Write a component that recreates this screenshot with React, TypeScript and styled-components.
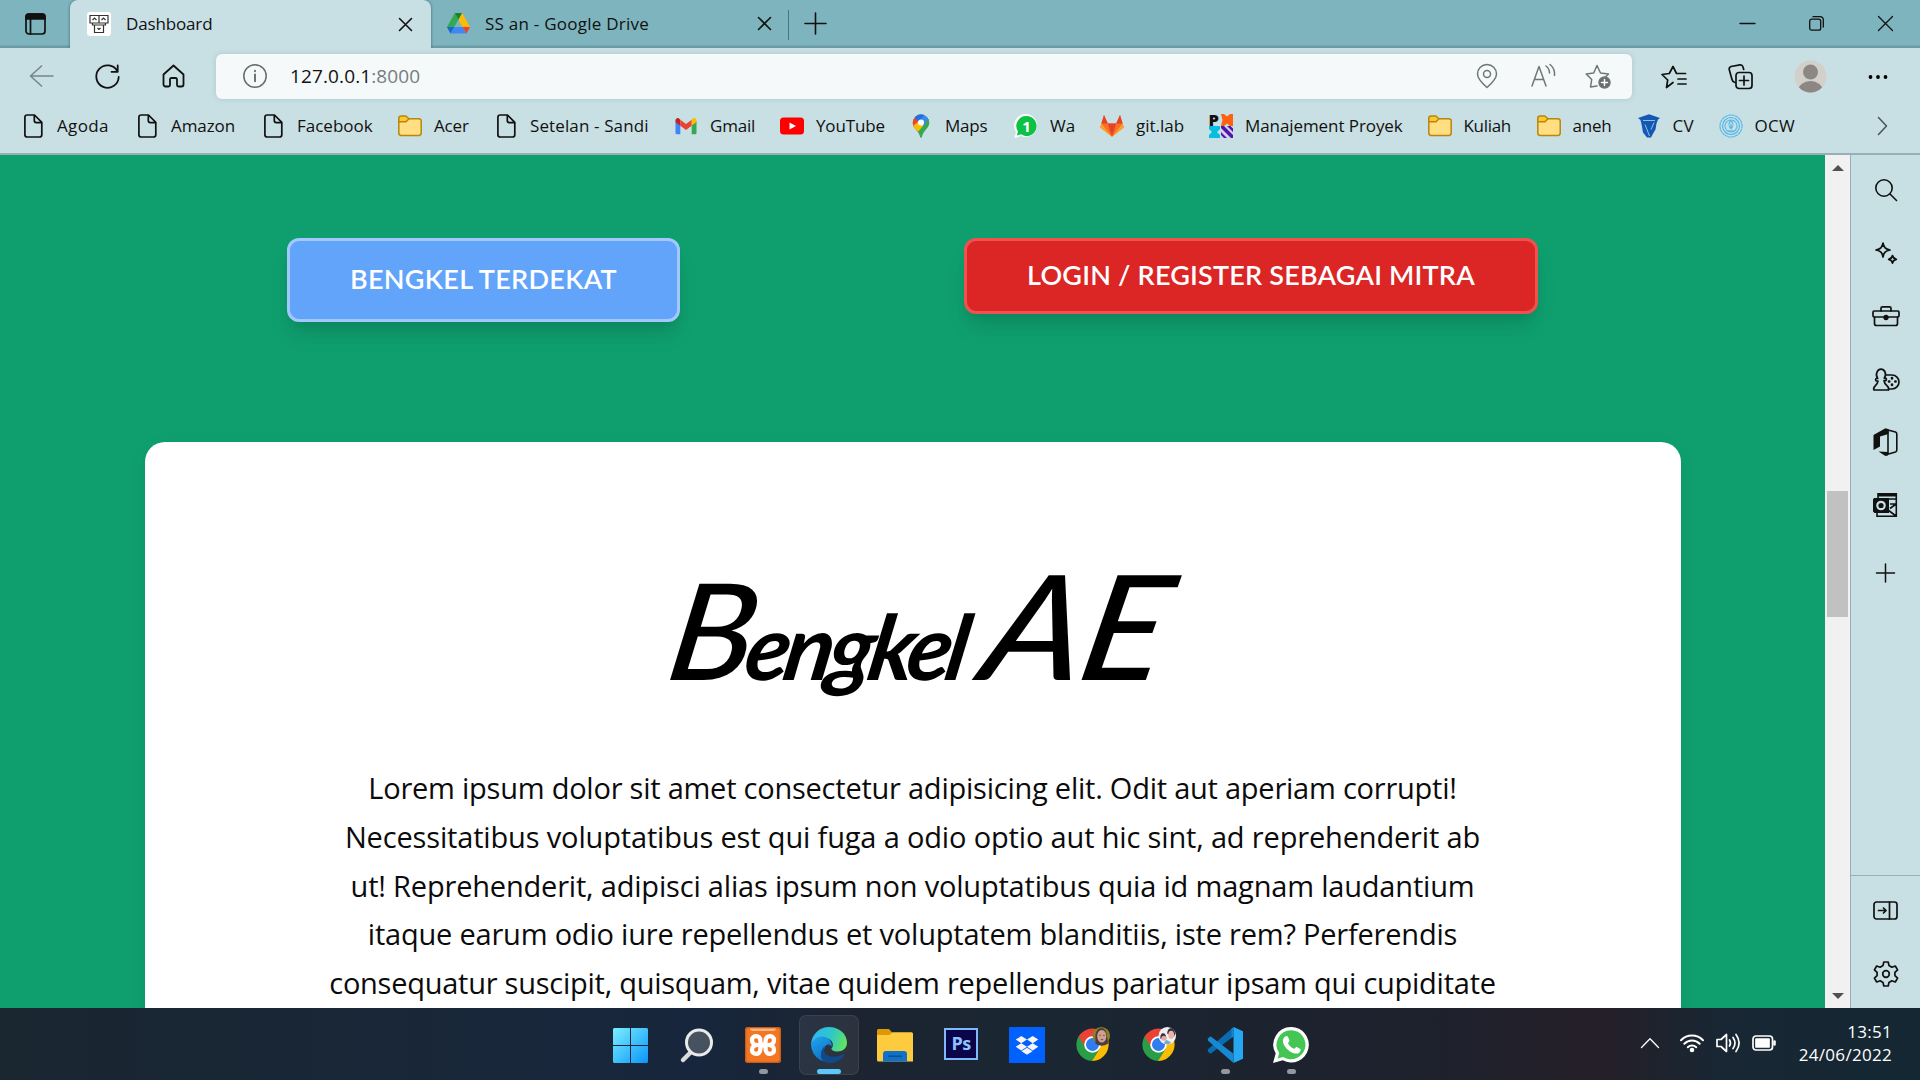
import React from 'react';
import styled, { createGlobalStyle } from 'styled-components';

const Global = createGlobalStyle`
  * { box-sizing: border-box; }
  html, body { margin: 0; padding: 0; overflow: hidden; }
  body { font-family: 'Open Sans', 'Noto Sans', sans-serif; color: #111; }
  svg { display: block; overflow: visible; flex: none; }
`;

const Screen = styled.div`
  width: 1920px; height: 1080px; overflow: hidden;
  display: flex; flex-direction: column;
`;

/* ---------- browser chrome ---------- */
const TabStrip = styled.div`
  height: 48px; display: flex; align-items: stretch;
  background: linear-gradient(#7eb4be 0 44px, #73a8b2 46px, #5b8c96 47px, #7fa9b1 48px);
`;
const TabActions = styled.div`
  width: 70px; display: flex; align-items: center; padding-left: 25px;
`;
const ActiveTab = styled.div`
  position: relative; width: 361px; display: flex; align-items: center; padding-left: 17px;
  background: #c8dfe3; border-radius: 8px 8px 0 0; box-shadow: 0 0 3px rgba(30, 70, 80, 0.7);
  clip-path: inset(0 -5px 0 -5px);
`;
const Tab = styled.div`
  width: 357px; height: 47px; display: flex; align-items: center; padding-left: 16px;
`;
const TabTitle = styled.span<{ $w: number; $ls?: number }>`
  width: ${(p) => p.$w}px; margin-left: 15px; font-size: 17px; line-height: 24px;
  letter-spacing: ${(p) => p.$ls ?? 0}px; white-space: nowrap;
`;
const TabDivider = styled.div`
  width: 1px; height: 30px; margin: 10px 16px 0 0; background: #47757e;
`;
const WindowButtons = styled.div`
  margin-left: auto; height: 47px; display: flex; align-items: center; gap: 54px; padding-right: 27px;
`;
const NewTab = styled.div`
  height: 46px; display: flex; align-items: center;
`;

const Toolbar = styled.div`
  height: 57px; display: flex; align-items: center; background: #c8dfe3; padding: 0 32px 0 29px;
`;
const NavButtons = styled.div`
  width: 187px; display: flex; align-items: center; gap: 42px; padding-bottom: 1px;
`;
const AddressBar = styled.div`
  width: 1416px; height: 45px; display: flex; align-items: center; padding: 0 21px 1px 27px;
  background: #f5f9fa; border-radius: 6px; box-shadow: 0 0 5px rgba(100, 150, 160, 0.3);
`;
const Url = styled.span`
  margin-left: 23px; font-size: 19px; letter-spacing: 0.12px; line-height: 26px;
`;
const Port = styled.span` color: #777d7f; `;
const AddressActions = styled.div`
  margin-left: auto; display: flex; align-items: center; gap: 29px;
`;
const ToolActions = styled.div`
  flex: 1; display: flex; align-items: center; justify-content: space-between; padding-left: 29px;
`;

const Bookmarks = styled.div`
  height: 50px; display: flex; align-items: center; padding: 0 32px 7px 21px;
  background: #c8dfe3; border-bottom: 2px solid #9aafb4;
`;
const Bookmark = styled.div`
  display: flex; align-items: center; gap: 12px; margin-right: 26px;
`;
const BookmarkLabel = styled.span<{ $w: number; $ls: number }>`
  width: ${(p) => p.$w}px; font-size: 17px; line-height: 24px; white-space: nowrap;
  letter-spacing: ${(p) => p.$ls}px;
`;
const More = styled.div` margin-left: auto; `;

/* ---------- page ---------- */
const Body = styled.div` height: 853px; display: flex; `;
const Page = styled.main`
  width: 1825px; overflow: hidden; background: #0f9f6e; display: flex; flex-direction: column; align-items: center;
`;
const ButtonRow = styled.div`
  flex: none; align-self: stretch; height: 287px; padding: 83px 0 0 287px; display: flex; align-items: flex-start; gap: 284px;
`;
const ActionButton = styled.button<{ $bg: string; $bd: string; $w: number; $h: number; $ls: number }>`
  width: ${(p) => p.$w}px; height: ${(p) => p.$h}px; padding: 0 0 3px;
  background: ${(p) => p.$bg}; border: 3px solid ${(p) => p.$bd}; border-radius: 12px;
  color: #fff; font: 600 27px/38px Lato, 'Open Sans', sans-serif; letter-spacing: ${(p) => p.$ls}px; white-space: nowrap;
  box-shadow: 0 15px 22px -4px rgba(0, 0, 0, 0.12), 0 6px 9px -3px rgba(0, 0, 0, 0.07);
`;
const Card = styled.section`
  width: 1536px; height: 640px; flex: none; background: #fff; border-radius: 20px;
  box-shadow: 0 4px 18px rgba(0, 0, 0, 0.06);
  display: flex; flex-direction: column; align-items: center;
`;
const Signature = styled.h1`
  margin: 107px 0 0; width: 522px; height: 215px; padding-left: 14px;
  display: flex; align-items: baseline; white-space: nowrap;
  font-family: Lato, 'Open Sans', sans-serif; font-style: italic; line-height: 150px; color: #000;
`;
const Stroke = styled.span<{ $size: number; $weight: number; $ls: number; $ml?: number; $skew: number; $sx: number }>`
  font-size: ${(p) => p.$size}px; font-weight: ${(p) => p.$weight}; letter-spacing: ${(p) => p.$ls}px;
  margin-left: ${(p) => p.$ml ?? 0}px; transform-origin: 0 75%;
  transform: skewX(${(p) => p.$skew}deg) scaleX(${(p) => p.$sx});
`;
const Paragraph = styled.p`
  margin: 0; display: flex; flex-direction: column; align-items: center; color: #0b0b0b;
  font-size: 29px; line-height: 48.75px;
`;
const Line = styled.span<{ $ls: number }>`
  white-space: nowrap; letter-spacing: ${(p) => p.$ls}px;
`;

const ScrollTrack = styled.div`
  width: 25px; background: #f1f1f1; display: flex; flex-direction: column; align-items: center;
  padding: 9px 0 8px; justify-content: space-between;
`;
const ScrollThumb = styled.div` width: 21px; height: 126px; margin-top: -57px; background: #c1c1c1; `;

const SideBar = styled.aside`
  width: 70px; background: #c8dfe3; border-left: 1px solid #9aafb4;
  display: flex; flex-direction: column; padding-top: 3px;
`;
const SideItem = styled.div<{ $h?: number }>`
  height: ${(p) => p.$h ?? 63.2}px; display: flex; align-items: center; justify-content: center;
`;
const SideFooter = styled.div`
  margin-top: auto; height: 133px; padding-top: 3px; border-top: 1px solid #9aafb4;
`;

/* ---------- taskbar ---------- */
const Taskbar = styled.footer`
  height: 72px; display: flex; padding-left: 598px;
  background: linear-gradient(90deg, #1a2630 0, #18273b 560px, #17263c 700px, #1c2431 850px, #1a2733 1050px, #1c222e 1300px, #1e212c 1450px, #251f29 1600px, #182733 1720px, #142733 1920px);
`;
const TaskItem = styled.div<{ $active?: boolean }>`
  width: 60px; height: 60px; margin: 7px 3px 0; padding-top: 12px; border-radius: 7px;
  display: flex; flex-direction: column; align-items: center;
  background: ${(p) => (p.$active ? 'rgba(255,255,255,0.07)' : 'none')};
  box-shadow: ${(p) => (p.$active ? 'inset 0 0 0 1px rgba(255,255,255,0.07)' : 'none')};
`;
const Indicator = styled.i<{ $active?: boolean }>`
  width: ${(p) => (p.$active ? 24 : 9)}px; height: 5px; margin-top: 6px; border-radius: 3px;
  background: ${(p) => (p.$active ? '#5cc7fb' : '#9297a0')};
`;
const PsTile = styled.div`
  width: 34px; height: 32px; margin: 1px 0 0; border: 2px solid #7fb8fb; background: #0b0549; color: #8ec3ff;
  font: 700 18px/27px 'Open Sans', sans-serif; text-align: center; letter-spacing: -0.5px;
`;
const Tray = styled.div`
  margin-left: auto; display: flex; align-items: center; padding: 0 28px 2px 0; color: #fff;
`;
const TrayIcon = styled.div<{ $mr: number }>` margin-right: ${(p) => p.$mr}px; `;
const Clock = styled.div`
  display: flex; flex-direction: column; align-items: flex-end; font-size: 17px; line-height: 23px; letter-spacing: 0.3px;
`;

type IconProps = { w: number; h: number; vb?: string; color?: string; sw?: number; children: React.ReactNode };
const Outline = ({ w, h, vb, color = '#111', sw = 1.6, children }: IconProps) => (
  <svg width={w} height={h} viewBox={vb ?? `0 0 ${w} ${h}`} fill="none" stroke={color} strokeWidth={sw} strokeLinecap="round" strokeLinejoin="round">
    {children}
  </svg>
);

const Cross = ({ s, sw = 1.6 }: { s: number; sw?: number }) => (
  <Outline w={s} h={s} sw={sw}><path d={`M.5 .5 ${s - 0.5} ${s - 0.5}M${s - 0.5} .5 .5 ${s - 0.5}`} /></Outline>
);
const DocIcon = () => (
  <Outline w={24} h={24} sw={1.7}><path d="M6.2 1h7.3l7.3 7.3v12.4a2.3 2.3 0 0 1-2.3 2.3H6.2a2.3 2.3 0 0 1-2.3-2.3V3.3A2.3 2.3 0 0 1 6.2 1zM13.3 1.4v5.2a2 2 0 0 0 2 2h5.2" /></Outline>
);
const FolderIcon = () => (
  <svg width="24" height="24" viewBox="0 0 24 24" stroke="#b8860b" strokeWidth="1.5" strokeLinejoin="round">
    <path d="M.8 5.5h20a2.4 2.4 0 0 1 2.4 2.4v12a2.4 2.4 0 0 1-2.4 2.4H3.2A2.4 2.4 0 0 1 .8 19.9z" fill="#ffdf82" transform="translate(0 -.8)" />
    <path d="M.8 4.4A2.4 2.4 0 0 1 3.2 2h4.6l3.2 2.7-3 3H.8z" fill="#fdc731" />
  </svg>
);
const GmailIcon = () => (
  <svg width="24" height="24" viewBox="0 0 24 24">
    <path d="M1.5 7v12a1.3 1.3 0 0 0 1.3 1.3h3.5V10z" fill="#4285f4" />
    <path d="M22.5 7v12a1.3 1.3 0 0 1-1.3 1.3h-3.5V10z" fill="#34a853" />
    <path d="M1.5 6.5v1.5l4.8 3.7V5.7L5 4.5C3.5 3.500 1.500 4.600 1.500 6.500z" fill="#c5221f" />
    <path d="M6.300 5.700v6L12 16l5.700-4.300v-6L12 10z" fill="#ea4335" />
    <path d="M22.500 6.500v1.500l-4.800 3.700V5.700L19 4.500c1.500-1 3.500.1 3.500 2z" fill="#fbbc04" />
  </svg>
);
const YouTubeIcon = () => (
  <svg width="24" height="24"><rect y="3.500" width="24" height="17" rx="3.500" fill="#f00" /><path d="M9.500 8.500v7l6.500-3.500z" fill="#fff" /></svg>
);
const MapsIcon = () => (
  <svg width="24" height="24" viewBox="0 0 24 24">
    <clipPath id="pin"><path d="M12 .5a8.200 8.200 0 0 1 8.200 8.200c0 5-4.200 6.800-6.300 11.300-.8 1.700-.8 3.800-1.900 3.800s-1.100-2.100-1.900-3.800C8 15.500 3.800 13.700 3.800 8.700A8.200 8.200 0 0 1 12 .5z" /></clipPath>
    <g clipPath="url(#pin)">
      <path d="M0 0h24v24H0z" fill="#34a853" /><path d="M0 0h24L4 20H0z" fill="#fbbc04" />
      <path d="M0 0h12L12 8 5 14H0z" fill="#ea4335" /><path d="M6 3 12 8 20 6 22 0H6z" fill="#4285f4" /><path d="M5 3 9 0h7l-6 8z" fill="#1a73e8" />
      <path d="M12 8.500 22 2v6L7 20 5 16z" fill="#34a853" /><path d="M4 12 11 6l4 5-8 9z" fill="#fbbc04" /><path d="M12 9 17 3l3 0-5 9z" fill="#4285f4" />
    </g>
    <circle cx="12" cy="8.500" r="3" fill="#fff" />
  </svg>
);
const WaIcon = () => (
  <svg width="24" height="24" viewBox="0 0 24 24">
    <path d="M12.500 0A11.500 11.500 0 1 1 7 22L.5 24l1.500-6A11.700 11.700 0 0 1 12.500 0z" fill="#fff" />
    <path d="M12.500 2A10 10 0 1 1 7 20.300L2.800 21.500l1.200-4A10 10 0 0 1 12.500 2z" fill="#0cc143" />
    <text x="12.500" y="17.500" textAnchor="middle" fontFamily="Open Sans" fontWeight="700" fontSize="15" fill="#fff">1</text>
  </svg>
);
const GitLabIcon = () => (
  <svg width="24" height="24" viewBox="0 0 24 24">
    <path d="M4 1 7.800 9.500h8.400L20 1l3.800 12.500L12 22.800.2 13.500z" fill="#fc6d26" />
    <path d="M4 1 7.800 9.500H1.400zM20 1l-3.800 8.500h6.400zM7.800 9.500h8.400L12 22.800z" fill="#e24329" />
    <path d="M1.400 9.500.2 13.500 12 22.800zM22.600 9.500l1.200 4L12 22.800z" fill="#fca326" />
  </svg>
);
const PmIcon = () => (
  <svg width="24" height="24" viewBox="0 0 24 24">
    <text x="-.5" y="12" fontFamily="Open Sans" fontWeight="800" fontSize="16.500" fill="#111">P</text>
    <path d="M12 0h3l3 2.500L21 0h3v12h-3l-3-2.500-3 2.500h-3l1.500-6z" fill="#ff610f" />
    <path d="M0 12h11v3l-3 3 3 3v3H0v-3l3-3-3-3z" fill="#05bfe0" />
    <path d="M12 12h12v12H12z" fill="#d7cfee" />
    <path d="M12 14v-2h3L24 21v3h-2zM12 21v-3l6 6h-3zM18 12h3.500l2.500 2.500V18z" fill="#4f17a8" />
  </svg>
);
const CvIcon = () => (
  <svg width="24" height="24" viewBox="0 0 24 24">
    <path d="M1 4 12 .3 23 4l-2 1.500-1.500 4-1 6-1.500 2.500-3 5.500h-4L6 18.500 4.500 10 3.500 6z" fill="#1259b5" />
    <path d="M8 10.500 12.500 22M17 8.500l-3 7M6 6.500l12 0" stroke="#c8dfe3" strokeWidth="1" fill="none" opacity=".75" />
  </svg>
);
const OcwIcon = () => (
  <Outline w={24} h={24} color="#4db5ea" sw={1.1}>
    <circle cx="12" cy="12" r="11" strokeDasharray="2.200 1.300" /><circle cx="12" cy="12" r="8.500" /><circle cx="12" cy="12" r="6" strokeDasharray="2 1" />
    <path d="M12 6.500c3 3 3 5 0 8-3-3-3-5 0-8zM9 17h6M12 10v5" />
  </Outline>
);
const DriveIcon = () => (
  <svg width="23" height="21" viewBox="0 0 23 21">
    <path d="M7.800 0 0 14l3.500 6.500L11.500 6.500z" fill="#34a853" /><path d="M7.800 0h7.400L11.500 6.800z" fill="#188038" />
    <path d="M15.200 0 23 14h-7.500L11.500 6.800z" fill="#fbbc04" /><path d="M0 14h7.500L3.500 20.500z" fill="#1967d2" />
    <path d="M7.500 14h8L19.500 20.500h-16z" fill="#4285f4" /><path d="M15.500 14H23l-3.500 6.500z" fill="#ea4335" />
  </svg>
);
const Favicon = () => (
  <svg width="24" height="24" viewBox="0 0 24 24">
    <rect width="24" height="24" rx="3" fill="#fff" />
    <path d="M3 3.500h9v7.500H3zM12 3.500h9v7.500h-9zM7.500 13h9v7.500h-9zM5.500 11v2h2M18.500 11v2h-2M5.500 8l2-2 2 2M14.500 8l2-2 2 2M10.500 16l1.500 1.500 1.500-1.500" fill="none" stroke="#333" strokeWidth="1.200" />
  </svg>
);

const bookmarks: [React.ReactNode, string, number, number][] = [
  [<DocIcon />, 'Agoda', 52, 0.35], [<DocIcon />, 'Amazon', 64, -0.1], [<DocIcon />, 'Facebook', 75, 0],
  [<FolderIcon />, 'Acer', 34, -0.15], [<DocIcon />, 'Setelan - Sandi', 118, 0.12], [<GmailIcon />, 'Gmail', 44, -0.2],
  [<YouTubeIcon />, 'YouTube', 67, -0.15], [<MapsIcon />, 'Maps', 43, -0.2], [<WaIcon />, 'Wa', 24, 0],
  [<GitLabIcon />, 'git.lab', 47, 0], [<PmIcon />, 'Manajement Proyek', 156.5, -0.08], [<FolderIcon />, 'Kuliah', 47, -0.3],
  [<FolderIcon />, 'aneh', 38, -0.2], [<CvIcon />, 'CV', 20, 0.3], [<OcwIcon />, 'OCW', 41, 0.3],
];

const paragraph: [string, number][] = [
  ['Lorem ipsum dolor sit amet consectetur adipisicing elit. Odit aut aperiam corrupti!', -0.235],
  ['Necessitatibus voluptatibus est qui fuga a odio optio aut hic sint, ad reprehenderit ab', -0.16],
  ['ut! Reprehenderit, adipisci alias ipsum non voluptatibus quia id magnam laudantium', -0.19],
  ['itaque earum odio iure repellendus et voluptatem blanditiis, iste rem? Perferendis', -0.21],
  ['consequatur suscipit, quisquam, vitae quidem repellendus pariatur ipsam qui cupiditate', -0.25],
];

const ChromeIcon = ({ girl }: { girl?: boolean }) => (
  <svg width="36" height="36" viewBox="0 0 37 37">
    <path d="M18 18 3.600 9.600A17 17 0 0 1 32.400 9.600z" fill="#ea4335" /><path d="M3.500 9.700A17 17 0 0 0 18 35l7.500-12.800L18 18z" fill="#2a9d48" />
    <path d="M18 10h14.600A17 17 0 0 1 17.500 35l8-13z" fill="#fbbc04" /><path d="M3.600 9.600 11 21.500 18 10h14.500z" fill="#ea4335" />
    <circle cx="18" cy="18" r="8.500" fill="#fff" /><circle cx="18" cy="18" r="6.700" fill="#2f7df1" />
    {girl ? (
      <g><circle cx="27" cy="9" r="9" fill="#8a8420" /><path d="M21 10c0-12 12-12 12 0l1 7c-5 3-8 3-13 0z" fill="#4d3b3d" /><ellipse cx="27.500" cy="9.500" rx="4.700" ry="6.500" fill="#d0a193" /><path d="M25 8.500h1.500M29 8.500h1.500M26.500 13h2.500" stroke="#65433f" /></g>
    ) : (
      <g><circle cx="27" cy="9" r="9" fill="#f2eef1" /><path d="M20 12c-1-7 6-8 6 0M27 7c0-8 8-7 8 0l-1 3z" fill="#332c38" /><circle cx="23.500" cy="11.500" r="2.600" fill="#e2aaa0" /><ellipse cx="31" cy="8" rx="3" ry="4.200" fill="#e8b5a8" /><path d="M23 17l3-4 5 3-3 2z" fill="#7aa8cd" /></g>
    )}
  </svg>
);

const StartIcon = () => (
  <svg width="36" height="36" viewBox="0 0 36 36">
    <defs><linearGradient id="win" x1="0" y1="0" x2="36" y2="36" gradientUnits="userSpaceOnUse"><stop stopColor="#7cf0ff" /><stop offset="1" stopColor="#0a93f7" /></linearGradient></defs>
    <path d="M1 1H17v17H0V2zM18 1h16l1 1v16h-17zM0 19h17v17H1l-1-1zM18 19h17v16l-1 1h-16z" fill="url(#win)" />
  </svg>
);
const TaskSearch = () => (
  <svg width="36" height="36" viewBox="0 0 36 36">
    <path d="M4 33 12 25" stroke="#d9dbdd" strokeWidth="4.500" strokeLinecap="round" />
    <circle cx="20" cy="15.500" r="12.500" fill="#46525f" stroke="#e9eaeb" strokeWidth="3" />
  </svg>
);
const XamppIcon = () => (
  <svg width="36" height="36" viewBox="0 0 36 36">
    <rect width="36" height="36" rx="3" fill="#f37623" /><rect x=".7" y=".7" width="34.600" height="34.600" rx="3" fill="none" stroke="#c85a17" strokeWidth="1.200" />
    <path d="M5 1.500h26c0 2-2 2.500-4 2.500H9C7 4 5 3.500 5 1.500z" fill="#f9b582" />
    <path d="M15.300 13.300c0-5.500-8.300-5.500-8.300-.3 0 3 2.200 5 5 5-2.800 0-5 2-5 5 0 5.200 8.300 5.200 8.300-.3 0-3 1.200-4.700 2.700-4.700s2.700 1.700 2.700 4.700c0 5.500 8.300 5.500 8.300.3 0-3-2.200-5-5-5 2.800 0 5-2 5-5 0-5.200-8.300-5.200-8.300.3 0 3-1.200 4.700-2.700 4.700s-2.700-1.700-2.700-4.700z" fill="none" stroke="#fff" strokeWidth="4.300" strokeLinejoin="round" />
  </svg>
);
const EdgeIcon = () => (
  <svg width="36" height="36" viewBox="0 0 36 36">
    <defs>
      <linearGradient id="e1" x1="2" y1="6" x2="35" y2="18" gradientUnits="userSpaceOnUse"><stop stopColor="#2fb6ee" /><stop offset=".5" stopColor="#2fc7c9" /><stop offset="1" stopColor="#62e55a" /></linearGradient>
      <linearGradient id="e2" x1="2" y1="14" x2="16" y2="36" gradientUnits="userSpaceOnUse"><stop stopColor="#1c9de6" /><stop offset="1" stopColor="#0c69c4" /></linearGradient>
    </defs>
    <path d="M0 18C.5 7 8.500 0 18 0c10 0 18 7 18 15.500 0 6-4.500 9-9.500 9-4 0-6.500-1.500-6-3 2-2 2-6-1-8.500C14 8.500 4 10 0 18z" fill="url(#e1)" />
    <path d="M0 18C3 9 12 7.500 17 11.500c3 2 4.500 5.500 3.500 8.500-1-4-7-3-7.500 3-.5 7 6 12 13 10.500A18 18 0 0 1 0 18z" fill="url(#e2)" />
    <path d="M13 22c-.5 6 6 10.500 19 5.500 1.500-.6 1.800 0 1 1C29 35 20 37.500 14 35 7.500 32 9.500 22 14.500 18.500 13.500 19.500 13 21 13 22z" fill="#114a8b" />
  </svg>
);
const ExplorerIcon = () => (
  <svg width="36" height="36" viewBox="0 0 36 36">
    <path d="M0 3.500A1.500 1.500 0 0 1 1.500 2H12l3.500 4H26v8H0z" fill="#dd9a05" />
    <path d="M0 8h12.500l3-2.700h19A1.500 1.500 0 0 1 36 6.800V34.500H1.500A1.500 1.500 0 0 1 0 33z" fill="#fecb3e" />
    <path d="M6 34.500V27a3 3 0 0 1 3-3h18a3 3 0 0 1 3 3v7.500z" fill="#0f72c8" /><path d="M11 29.300h14" stroke="#094f92" strokeWidth="1.600" />
  </svg>
);
const DropboxIcon = () => (
  <svg width="36" height="36" viewBox="0 0 36 36">
    <rect width="36" height="36" fill="#0061fe" />
    <path d="M12.300 9l5.700 3.600-5.700 3.600-5.600-3.600zM23.700 9l5.600 3.600-5.600 3.600-5.700-3.600zM12.300 16.200l5.700 3.600-5.700 3.600-5.600-3.600zM23.700 16.200l5.600 3.600-5.600 3.600-5.700-3.600zM18 20.800l5.500 3.500-5.500 3.500-5.500-3.500z" fill="#f7f5f2" />
  </svg>
);
const VsCodeIcon = () => (
  <svg width="36" height="36" viewBox="0 0 36 36">
    <path d="M.8 24.500 3.500 26.700 26.500 9.500V0L.8 22.500z" fill="#0a6cb0" />
    <path d="M26.500 0 36 4.200v27.600L26.500 36z" fill="#25a7f2" /><path d="M24.500 1.800 26.500 0v9.500l-2 1.500z" fill="#1486cb" />
    <path d="M.8 11.500 3.500 9.300 26.500 26.800V36L.8 13.500z" fill="#1689d0" />
  </svg>
);
const WhatsAppIcon = () => (
  <svg width="36" height="36" viewBox="0 0 36 36">
    <path d="M18.300 0A17.700 17.700 0 1 1 9.800 33.300L0 36l2.700-9.500A17.700 17.700 0 0 1 18.300 0z" fill="#fff" />
    <path d="M18.300 3.200A14.500 14.500 0 1 1 10.300 30l-5.700 1.500L6.200 26A14.500 14.500 0 0 1 18.300 3.200z" fill="#45c554" />
    <path d="M12.200 9.500c1-.9 2.300-.7 2.700.2l1.500 3.500c.4 1-1.400 2.400-1.400 3 1.200 2.600 3.200 4.400 5.900 5.600.8.200 1.900-2.200 2.800-1.800l3.600 1.900c.9.600 0 3.200-1.400 4-2 1.100-4.500.8-8-1C13.500 22.500 10.300 18 9.900 14.500c-.2-2 .8-4 2.300-5z" fill="#fff" />
  </svg>
);

export default function App() {
  return (
    <Screen>
      <Global />
      <TabStrip>
        <TabActions>
          <Outline w={21} h={22} sw={1.7}><rect x="1" y="1" width="19" height="20" rx="3" /><path d="M1 6V3.500C1 2 2 1 3.500 1h14C19 1 20 2 20 3.500V6z" fill="#111" /><path d="M5.500 6v15" /></Outline>
        </TabActions>
        <ActiveTab>
          <Favicon />
          <TabTitle $w={273} $ls={-0.15}>Dashboard</TabTitle>
          <Cross s={13} />
        </ActiveTab>
        <Tab>
          <DriveIcon />
          <TabTitle $w={273} $ls={0.25}>SS an - Google Drive</TabTitle>
          <Cross s={13} />
        </Tab>
        <TabDivider />
        <NewTab><Outline w={21} h={21}><path d="M10.500 0v21M0 10.500h21" /></Outline></NewTab>
        <WindowButtons>
          <Outline w={15} h={15} sw={1.3}><path d="M0 7.500h15" /></Outline>
          <Outline w={15} h={15} sw={1.3}><rect x=".7" y="3.200" width="11" height="11" rx="2" /><path d="M4 .7h7.300a3 3 0 0 1 3 3V11" /></Outline>
          <Cross s={15} sw={1.3} />
        </WindowButtons>
      </TabStrip>
      <Toolbar>
        <NavButtons>
          <Outline w={24} h={24} color="#75868a"><path d="M12.500 2 1.500 12l11 10M1.500 12H24" /></Outline>
          <Outline w={25} h={25} sw={1.8}><path d="M22.500 7.500A11.200 11.200 0 1 0 23.700 13M22.700 1.500v6.300h-6.200" /></Outline>
          <Outline w={23} h={24} sw={1.8}><path d="M1.500 10.500 11.500 1.500l10 9v10a2 2 0 0 1-2 2h-3a1.500 1.500 0 0 1-1.500-1.500v-5.500a1.500 1.500 0 0 0-1.500-1.500h-4A1.500 1.500 0 0 0 8 15v6a1.500 1.500 0 0 1-1.500 1.500h-3a2 2 0 0 1-2-2z" /></Outline>
        </NavButtons>
        <AddressBar>
          <Outline w={24} h={24} color="#666c6e" sw={1.5}><circle cx="12" cy="12" r="11.200" /><path d="M12 10.500v6.800M12 6.800v.5" strokeWidth="1.900" /></Outline>
          <Url>127.0.0.1<Port>:8000</Port></Url>
          <AddressActions>
            <Outline w={24} h={24} color="#707678" sw={1.5}><path d="M12 23.500C8 20 2.500 15 2.500 10a9.500 9.500 0 0 1 19 0c0 5-5.500 10-9.500 13.500z" /><circle cx="12" cy="10" r="3.500" /></Outline>
            <Outline w={28} h={24} color="#707678" sw={1.5}><path d="M4 22 11 2.500 18 22M6.500 15.500h9M18 2c2.300 1.800 3.500 4 3.500 7M22 .5c3.500 2.700 5 6.500 4.500 11" /></Outline>
            <Outline w={26} h={24} color="#707678" sw={1.5}><path d="M12 22 5.500 23l1.200-7.500L1.200 10l7.500-1L12 1.500 15.500 9l8 1-3 3" /><circle cx="19.500" cy="18.500" r="5.500" fill="#666c6e" /><path d="M19.500 15.500v6M16.500 18.500h6" stroke="#fff" /></Outline>
          </AddressActions>
        </AddressBar>
        <ToolActions>
          <Outline w={26} h={24} sw={1.7}><path d="M12 17.500 5.500 22.500 6.700 15 1 9.500l7.300-1L12 1.500l3.500 7h9M17 14h8M17 19h8" /></Outline>
          <Outline w={25} h={25} sw={1.7}><path d="M7 18.500C5 18 4.300 17 4 15.500L1.200 5.500C1 4 1.700 3 3 2.500L12 .9c1.500-.2 2.500.5 3 2l.7 2.500" /><rect x="8" y="8.500" width="16" height="16" rx="3" /><path d="M16 12v9M11.500 16.500h9" /></Outline>
          <svg width="33" height="33" viewBox="0 0 33 33"><clipPath id="av"><circle cx="16.500" cy="16.500" r="16" /></clipPath><g clipPath="url(#av)"><path d="M0 0h33v33H0z" fill="#d3cfcb" /><circle cx="16.500" cy="12" r="7.500" fill="#8c8783" /><ellipse cx="16.500" cy="30" rx="12" ry="9" fill="#8c8783" /></g></svg>
          <svg width="20" height="6"><circle cx="2.500" cy="3" r="1.900" /><circle cx="10" cy="3" r="1.900" /><circle cx="17.500" cy="3" r="1.900" /></svg>
        </ToolActions>
      </Toolbar>
      <Bookmarks>
        {bookmarks.map(([icon, label, w, ls]) => (
          <Bookmark key={label}>{icon}<BookmarkLabel $w={w} $ls={ls}>{label}</BookmarkLabel></Bookmark>
        ))}
        <More><Outline w={11} h={18} color="#4d5658"><path d="M1.500 .5 9.500 9l-8 8.500" /></Outline></More>
      </Bookmarks>
      <Body>
        <Page>
          <ButtonRow>
            <ActionButton $bg="#61a4fa" $bd="#a2c8fd" $w={393} $h={84} $ls={0.3}>BENGKEL TERDEKAT</ActionButton>
            <ActionButton $bg="#dc2626" $bd="#ef5050" $w={574} $h={76} $ls={0.2}>LOGIN / REGISTER SEBAGAI MITRA</ActionButton>
          </ButtonRow>
          <Card>
            <Signature>
              <Stroke $size={134} $weight={500} $ls={0} $skew={-10} $sx={1.05}>B</Stroke>
              <Stroke $size={90} $weight={700} $ls={-5.5} $ml={-6} $skew={-10} $sx={1.02}>engkel</Stroke>
              <Stroke $size={146} $weight={500} $ls={-2} $ml={28} $skew={-12} $sx={1.07}>AE</Stroke>
            </Signature>
            <Paragraph>
              {paragraph.map(([text, ls]) => <Line key={text} $ls={ls}>{text}</Line>)}
            </Paragraph>
          </Card>
        </Page>
        <ScrollTrack>
          <svg width="12" height="7"><path d="M0 7 6 1l6 6z" fill="#505050" /></svg>
          <ScrollThumb />
          <svg width="12" height="7"><path d="M0 0h12L6 6z" fill="#505050" /></svg>
        </ScrollTrack>
        <SideBar>
          <SideItem><Outline w={22} h={22}><circle cx="9" cy="9" r="8.200" /><path d="m15 15 6.500 6.500" /></Outline></SideItem>
          <SideItem><Outline w={22} h={22} sw={1.7}><path d="M8 1c.8 4.500 2.500 6 7 7-4.500 1-6.200 2.500-7 7-.8-4.500-2.500-6-7-7 4.500-1 6.200-2.500 7-7zM17.500 13.500c.5 2.500 1.300 3.200 3.800 3.800-2.500.6-3.300 1.300-3.800 3.800-.5-2.500-1.300-3.200-3.800-3.800 2.500-.6 3.300-1.300 3.800-3.800z" /></Outline></SideItem>
          <SideItem><Outline w={28} h={20} sw={1.7}><rect x="1" y="5" width="26" height="6" rx="1.200" /><path d="M2.500 11v6.500a2 2 0 0 0 2 2h19a2 2 0 0 0 2-2V11M9 5V2.300C9 1.300 9.500.8 10.500.8h7c1 0 1.500.5 1.500 1.500V5" /><circle cx="14" cy="11.500" r="1.800" fill="#111" /></Outline></SideItem>
          <SideItem><Outline w={28} h={23} sw={1.7}><path d="M15.500 22H2c-2-3.500 3.500-4 4-9H4.500C3.300 13 3.300 10.500 4.500 10.500h1.200C3 7 5 1.200 9 1.200s6 5.500 3.200 9h1.300c1.200 0 1.200 2.500 0 2.500H12c.5 5.300 6 5.300 4.500 9.300M14 7h6a7 7 0 0 1 0 14h-3" /><path d="M20 10v.4M20 16.500v.4M17 13.500h.3M23.300 13.500h.3" strokeWidth="2.600" /></Outline></SideItem>
          <SideItem><svg width="25" height="28" viewBox="0 0 25 28"><path d="M.5 7 12 .5 15.500 1v5L7 8.500v10L.5 22z" fill="#111" /><path d="M5.500 23.500 15 24v3.500l-3 .2z" fill="#111" /><path d="M12 1.200 22.500 4c.8.300 1.300 1 1.300 2v16c0 1-.5 1.700-1.300 2L12 27M15 2.500v24" fill="none" stroke="#111" strokeWidth="1.600" /></svg></SideItem>
          <SideItem><svg width="25" height="25" viewBox="0 0 25 25"><path d="M5 5V.7h18.300v22.600H4V18M14 6h9M17 11h6M23 11l-6 4.500M15 17l8 6" fill="none" stroke="#111" strokeWidth="1.600" /><path d="M5 0h19v3.500H5zM1 5h15v15H1.500L0 18.500V6.500z" fill="#111" /><circle cx="8" cy="12.500" r="3.700" fill="none" stroke="#c8dfe3" strokeWidth="2.200" /></svg></SideItem>
          <SideItem $h={72}><Outline w={18} h={18} sw={1.5}><path d="M8.500 0v18M-.5 9h18" /></Outline></SideItem>
          <SideFooter>
            <SideItem><Outline w={25} h={19} sw={1.7}><rect x="1" y="1" width="23" height="17" rx="2.500" /><path d="M16.500 1v17M5.500 9.500h7.500M10.500 7l2.500 2.500L10.500 12" /></Outline></SideItem>
            <SideItem><Outline w={26} h={26} vb="0 0 26 26" sw={1.7}><path d="M10.800 1h4.400l.8 3.600 2.800 1.600 3.500-1.200 2.300 3.900-2.700 2.500v3.200l2.700 2.500-2.300 3.900-3.500-1.200-2.800 1.600-.8 3.600h-4.400l-.8-3.600-2.800-1.600L3.700 21l-2.300-3.900 2.700-2.500v-3.200L1.400 8.900 3.700 5l3.500 1.200L10 4.600z" /><circle cx="13" cy="13" r="3.300" /></Outline></SideItem>
          </SideFooter>
        </SideBar>
      </Body>
      <Taskbar>
        <TaskItem><StartIcon /></TaskItem>
        <TaskItem><TaskSearch /></TaskItem>
        <TaskItem><XamppIcon /><Indicator /></TaskItem>
        <TaskItem $active><EdgeIcon /><Indicator $active /></TaskItem>
        <TaskItem><ExplorerIcon /></TaskItem>
        <TaskItem><PsTile>Ps</PsTile></TaskItem>
        <TaskItem><DropboxIcon /></TaskItem>
        <TaskItem><ChromeIcon girl /></TaskItem>
        <TaskItem><ChromeIcon /></TaskItem>
        <TaskItem><VsCodeIcon /><Indicator /></TaskItem>
        <TaskItem><WhatsAppIcon /><Indicator /></TaskItem>
        <Tray>
          <TrayIcon $mr={21}><Outline w={18} h={10} color="#fff" sw={1.3}><path d="M.5 9.500 9 .8l8.500 8.700" /></Outline></TrayIcon>
          <TrayIcon $mr={12}><Outline w={24} h={18} color="#fff" sw={2}><path d="M1 6.200a15.500 15.500 0 0 1 22 0M4.300 9.700a10.800 10.800 0 0 1 15.400 0M7.800 13.200a6 6 0 0 1 8.400 0" /><circle cx="12" cy="16" r="1.300" fill="#fff" /></Outline></TrayIcon>
          <TrayIcon $mr={12}><Outline w={24} h={20} color="#fff" sw={1.7}><path d="M1 6.500h4L10.500 1.500v17L5 13.500H1zM13.500 7c1.300 2 1.300 4 0 6M17 4.500c2.500 3.500 2.500 7.500 0 11M20 1.500c4 5.500 4 11.500 0 17" /></Outline></TrayIcon>
          <TrayIcon $mr={23}><Outline w={24} h={16} color="#fff" sw={1.7}><rect x="1" y="1" width="19.500" height="14" rx="3" /><rect x="4" y="4" width="13" height="8" fill="#fff" /><path d="M22.500 6.500v3" strokeWidth="2.500" /></Outline></TrayIcon>
          <Clock><span>13:51</span><span>24/06/2022</span></Clock>
        </Tray>
      </Taskbar>
    </Screen>
  );
}
